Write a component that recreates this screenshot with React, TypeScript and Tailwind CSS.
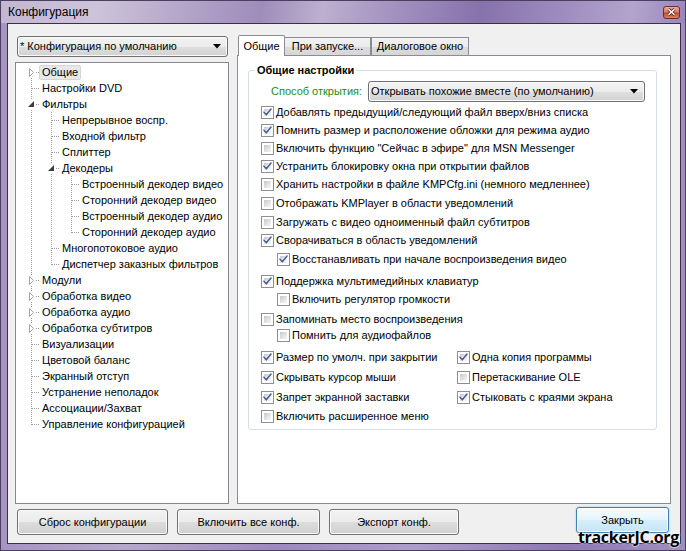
import React from "react";

type TreeNode = {
  label: string;
  guides: boolean[];
  pos: "first" | "mid" | "last";
  exp?: "open" | "closed";
  selected?: boolean;
};

const tree: TreeNode[] = [
  { label: "Общие", guides: [], pos: "first", exp: "closed", selected: true },
  { label: "Настройки DVD", guides: [], pos: "mid" },
  { label: "Фильтры", guides: [], pos: "mid", exp: "open" },
  { label: "Непрерывное воспр.", guides: [true], pos: "mid" },
  { label: "Входной фильтр", guides: [true], pos: "mid" },
  { label: "Сплиттер", guides: [true], pos: "mid" },
  { label: "Декодеры", guides: [true], pos: "mid", exp: "open" },
  { label: "Встроенный декодер видео", guides: [true, true], pos: "mid" },
  { label: "Сторонний декодер видео", guides: [true, true], pos: "mid" },
  { label: "Встроенный декодер аудио", guides: [true, true], pos: "mid" },
  { label: "Сторонний декодер аудио", guides: [true, true], pos: "last" },
  { label: "Многопотоковое аудио", guides: [true], pos: "mid" },
  { label: "Диспетчер заказных фильтров", guides: [true], pos: "last" },
  { label: "Модули", guides: [], pos: "mid", exp: "closed" },
  { label: "Обработка видео", guides: [], pos: "mid", exp: "closed" },
  { label: "Обработка аудио", guides: [], pos: "mid", exp: "closed" },
  { label: "Обработка субтитров", guides: [], pos: "mid", exp: "closed" },
  { label: "Визуализации", guides: [], pos: "mid" },
  { label: "Цветовой баланс", guides: [], pos: "mid" },
  { label: "Экранный отступ", guides: [], pos: "mid" },
  { label: "Устранение неполадок", guides: [], pos: "mid" },
  { label: "Ассоциации/Захват", guides: [], pos: "mid" },
  { label: "Управление конфигурацией", guides: [], pos: "last" },
];

type Opt = { on: boolean; label: string };
type Row = { cls: string; indent?: boolean; items: Opt[] };

// margins tuned to the row centres of the original dialog
const rows: Row[] = [
  { cls: "mt-[1px] h-[18px]", items: [{ on: true, label: "Добавлять предыдущий/следующий файл вверх/вниз списка" }] },
  { cls: "h-[18px]", items: [{ on: true, label: "Помнить размер и расположение обложки для режима аудио" }] },
  { cls: "h-[18px]", items: [{ on: false, label: "Включить функцию \"Сейчас в эфире\" для MSN Messenger" }] },
  { cls: "h-[18px]", items: [{ on: true, label: "Устранить блокировку окна при открытии файлов" }] },
  { cls: "h-[18px]", items: [{ on: false, label: "Хранить настройки в файле KMPCfg.ini (немного медленнее)" }] },
  { cls: "mt-[1px] h-[18px]", items: [{ on: false, label: "Отображать KMPlayer в области уведомлений" }] },
  { cls: "mt-[1px] h-[18px]", items: [{ on: false, label: "Загружать с видео одноименный файл субтитров" }] },
  { cls: "h-[18px]", items: [{ on: true, label: "Сворачиваться в область уведомлений" }] },
  { cls: "mt-[1px] h-[18px]", indent: true, items: [{ on: true, label: "Восстанавливать при начале воспроизведения видео" }] },
  { cls: "mt-[4px] h-[18px]", items: [{ on: true, label: "Поддержка мультимедийных клавиатур" }] },
  { cls: "h-[18px]", indent: true, items: [{ on: false, label: "Включить регулятор громкости" }] },
  { cls: "mt-[3px] h-[16px]", items: [{ on: false, label: "Запоминать место воспроизведения" }] },
  { cls: "h-[16px]", indent: true, items: [{ on: false, label: "Помнить для аудиофайлов" }] },
  {
    cls: "mt-[5px] h-[18px]",
    items: [
      { on: true, label: "Размер по умолч. при закрытии" },
      { on: true, label: "Одна копия программы" },
    ],
  },
  {
    cls: "mt-[2px] h-[18px]",
    items: [
      { on: true, label: "Скрывать курсор мыши" },
      { on: false, label: "Перетаскивание OLE" },
    ],
  },
  {
    cls: "mt-[2px] h-[18px]",
    items: [
      { on: true, label: "Запрет экранной заставки" },
      { on: true, label: "Стыковать с краями экрана" },
    ],
  },
  { cls: "mt-[1px] h-[18px]", items: [{ on: false, label: "Включить расширенное меню" }] },
];

const winBtn =
  "flex items-center justify-center h-[26px] rounded-[3px] border border-[#707070] bg-[linear-gradient(#f2f2f2_0%,#ebebeb_50%,#dddddd_51%,#cfcfcf_100%)] shadow-[inset_0_0_0_1px_#fbfbfb]";

const combo =
  "flex items-center justify-between rounded-[3px] border border-[#707070] bg-[linear-gradient(#f3f3f3_0%,#ececec_50%,#dfdfdf_51%,#d2d2d2_100%)] shadow-[inset_0_0_0_1px_#fafafa]";

const Arrow = () => (
  <svg width="8" height="5" viewBox="0 0 8 5" className="shrink-0">
    <polygon points="0,0 8,0 4,4.5" fill="#000" />
  </svg>
);

const CheckBox = ({ on }: { on: boolean }) => (
  <span className="relative block w-[13px] h-[13px] shrink-0 border border-[#8e8f8f] bg-white p-[2px]">
    <span className="block w-full h-full bg-[linear-gradient(135deg,#c3c8cf_0%,#e4e6e9_60%,#f6f6f6_100%)]" />
    {on && (
      <svg width="11" height="11" viewBox="0 0 11 11" className="absolute inset-0">
        <path d="M2 5.2 L4.3 7.8 L9 2" fill="none" stroke="#fff" strokeWidth="3" strokeLinecap="round" strokeLinejoin="round" opacity="0.7" />
        <path d="M2 5.2 L4.3 7.8 L9 2" fill="none" stroke="#4a5f90" strokeWidth="1.6" strokeLinecap="round" strokeLinejoin="round" />
      </svg>
    )}
  </span>
);

const Option = ({ on, label }: Opt) => (
  <div className="flex items-center gap-[2px] whitespace-nowrap">
    <CheckBox on={on} />
    <span>{label}</span>
  </div>
);

const TreeRow = ({ node }: { node: TreeNode }) => (
  <div className="flex items-center h-[16px]">
    {node.guides.map((g, i) => (
      <svg key={i} width="20" height="16" className="shrink-0">
        {g && <line x1="10.5" x2="10.5" y1="0" y2="16" stroke="#a0a0a0" strokeDasharray="1 1" />}
      </svg>
    ))}
    <svg width="18" height="16" className="shrink-0">
      <line
        x1="10.5"
        x2="10.5"
        y1={node.pos === "first" ? 8 : 0}
        y2={node.pos === "last" ? 9 : 16}
        stroke="#a0a0a0"
        strokeDasharray="1 1"
      />
      <line x1="11" x2="18" y1="8.5" y2="8.5" stroke="#a0a0a0" strokeDasharray="1 1" />
      {node.exp && <rect x="6" y="3" width="8" height="11" fill="#fff" />}
      {node.exp === "closed" && (
        <polygon points="8.5,4.5 12.5,8.5 8.5,12.5" fill="#fff" stroke="#a6a6a6" strokeWidth="1" />
      )}
      {node.exp === "open" && <polygon points="13,5 13,11 7,11" fill="#3c3c3c" />}
    </svg>
    <span
      className={`h-[15px] leading-[13px] px-[2px] border rounded-[2px] whitespace-nowrap ${
        node.selected ? "bg-[#e8e8e8] border-[#d6d6d6]" : "border-transparent"
      }`}
    >
      {node.label}
    </span>
  </div>
);

export default function App() {
  return (
    <div className="relative w-[686px] h-[551px] overflow-hidden border border-[#4b3f5e] bg-[linear-gradient(90deg,#a694c3_0%,#b6a8cc_18%,#9d89bd_40%,#ad9dca_60%,#8e79b3_82%,#a08ec1_100%)] font-['Liberation_Sans',Arial,sans-serif] text-[11px] text-black">
      {/* title bar */}
      <div className="flex items-center justify-between h-[22px] pl-[7px] pr-[5px] bg-[linear-gradient(100deg,#c2b6d2_0%,#cdc4da_14%,#b5a7ca_26%,#9f8cbb_38%,#bcb0cf_47%,#a492c1_57%,#8772ab_70%,#9e8cbf_82%,#b3a4cd_92%,#9886bb_100%)]">
        <span className="text-[12px] leading-none text-black">Конфигурация</span>
        <div className="flex items-center justify-center w-[17px] h-[13px] rounded-[3px] border border-[#6b2f24] bg-[linear-gradient(#eab0a0_0%,#d97a62_45%,#c34a30_55%,#d9825e_100%)]">
          <svg width="9" height="8" viewBox="0 0 9 8">
            <path d="M1.5 1.2 L7.5 6.8 M7.5 1.2 L1.5 6.8" stroke="#5a2418" strokeWidth="3" />
            <path d="M1.5 1.2 L7.5 6.8 M7.5 1.2 L1.5 6.8" stroke="#fff" strokeWidth="1.5" />
          </svg>
        </div>
      </div>

      {/* client area */}
      <div className="ml-[6px] w-[674px] h-[521px] border border-[#3a3147] bg-[#f0f0f0] flex flex-col">
        <div className="flex h-[480px]">
          {/* left column */}
          <div className="ml-[7px] w-[214px] pt-[12px] flex flex-col">
            <div className={`${combo} ml-[2px] w-[211px] h-[21px] pl-[2px] pr-[6px]`}>
              <span>* Конфигурация по умолчанию</span>
              <Arrow />
            </div>
            <div className="mt-[5px] flex-1 border border-[#828790] bg-white pt-[1px] pl-[5px]">
              {tree.map((n) => (
                <TreeRow key={n.label} node={n} />
              ))}
            </div>
          </div>

          {/* right column */}
          <div className="ml-[8px] w-[434px] pt-[11px] flex flex-col">
            <div className="relative z-10 flex items-end h-[20px] pl-[1px]">
              <div className="flex items-center justify-center w-[47px] h-[21px] -mb-[1px] bg-white border border-b-0 border-[#898c95] rounded-t-[2px]">
                Общие
              </div>
              <div className="flex items-center justify-center w-[86px] h-[18px] border border-b-0 border-l-0 border-[#898c95] bg-[linear-gradient(#f2f2f2_0%,#ebebeb_50%,#dddddd_51%,#d6d6d6_100%)]">
                При запуске...
              </div>
              <div className="flex items-center justify-center w-[98px] h-[18px] border border-b-0 border-[#898c95] bg-[linear-gradient(#f2f2f2_0%,#ebebeb_50%,#dddddd_51%,#d6d6d6_100%)]">
                Диалоговое окно
              </div>
            </div>
            <div className="flex-1 border border-[#898c95] bg-white">
              <fieldset className="ml-[10px] mt-[8px] w-[409px] h-[366px] border border-[#d5dfe5] rounded-[3px]">
                <legend className="ml-[6px] px-[2px] font-bold leading-[13px]">Общие настройки</legend>
                <div className="mt-[4px] flex items-center h-[21px] pl-[22px]">
                  <span className="w-[97px] text-[#228b22]">Способ открытия:</span>
                  <div className={`${combo} w-[277px] h-[21px] pl-[2px] pr-[6px]`}>
                    <span>Открывать похожие вместе (по умолчанию)</span>
                    <Arrow />
                  </div>
                </div>
                {rows.map((r, i) => (
                  <div key={i} className={`flex items-center ${r.cls} ${r.indent ? "pl-[28px]" : "pl-[12px]"}`}>
                    {r.items.map((o, j) => (
                      <div key={j} className={j === 0 && r.items.length > 1 ? "w-[196px]" : ""}>
                        <Option on={o.on} label={o.label} />
                      </div>
                    ))}
                  </div>
                ))}
              </fieldset>
            </div>
          </div>
        </div>

        {/* buttons */}
        <div className="flex items-start pl-[9px]">
          <div className={`${winBtn} mt-[5px] w-[151px]`}>Сброс конфигурации</div>
          <div className={`${winBtn} mt-[5px] ml-[9px] w-[143px]`}>Включить все конф.</div>
          <div className={`${winBtn} mt-[5px] ml-[9px] w-[130px]`}>Экспорт конф.</div>
          <div className="mt-[3px] ml-auto mr-[11px] w-[93px] h-[26px] flex items-center justify-center rounded-[3px] border border-[#3c7fb1] bg-[linear-gradient(#f5fbfe_0%,#e6f4fc_50%,#d6eefb_51%,#c4e5f7_100%)] shadow-[0_0_2px_#7ec4ee,inset_0_0_0_1px_#ffffff]">
            Закрыть
          </div>
        </div>
      </div>

      {/* watermark */}
      <span className="absolute right-[6px] bottom-[5px] font-['Open_Sans',sans-serif] font-bold text-[16px] leading-none tracking-[-0.3px] text-black [text-shadow:0_0_2px_#fff,0_0_2px_#fff,0_0_1px_#fff]">
        trackerJC.org
      </span>
    </div>
  );
}
